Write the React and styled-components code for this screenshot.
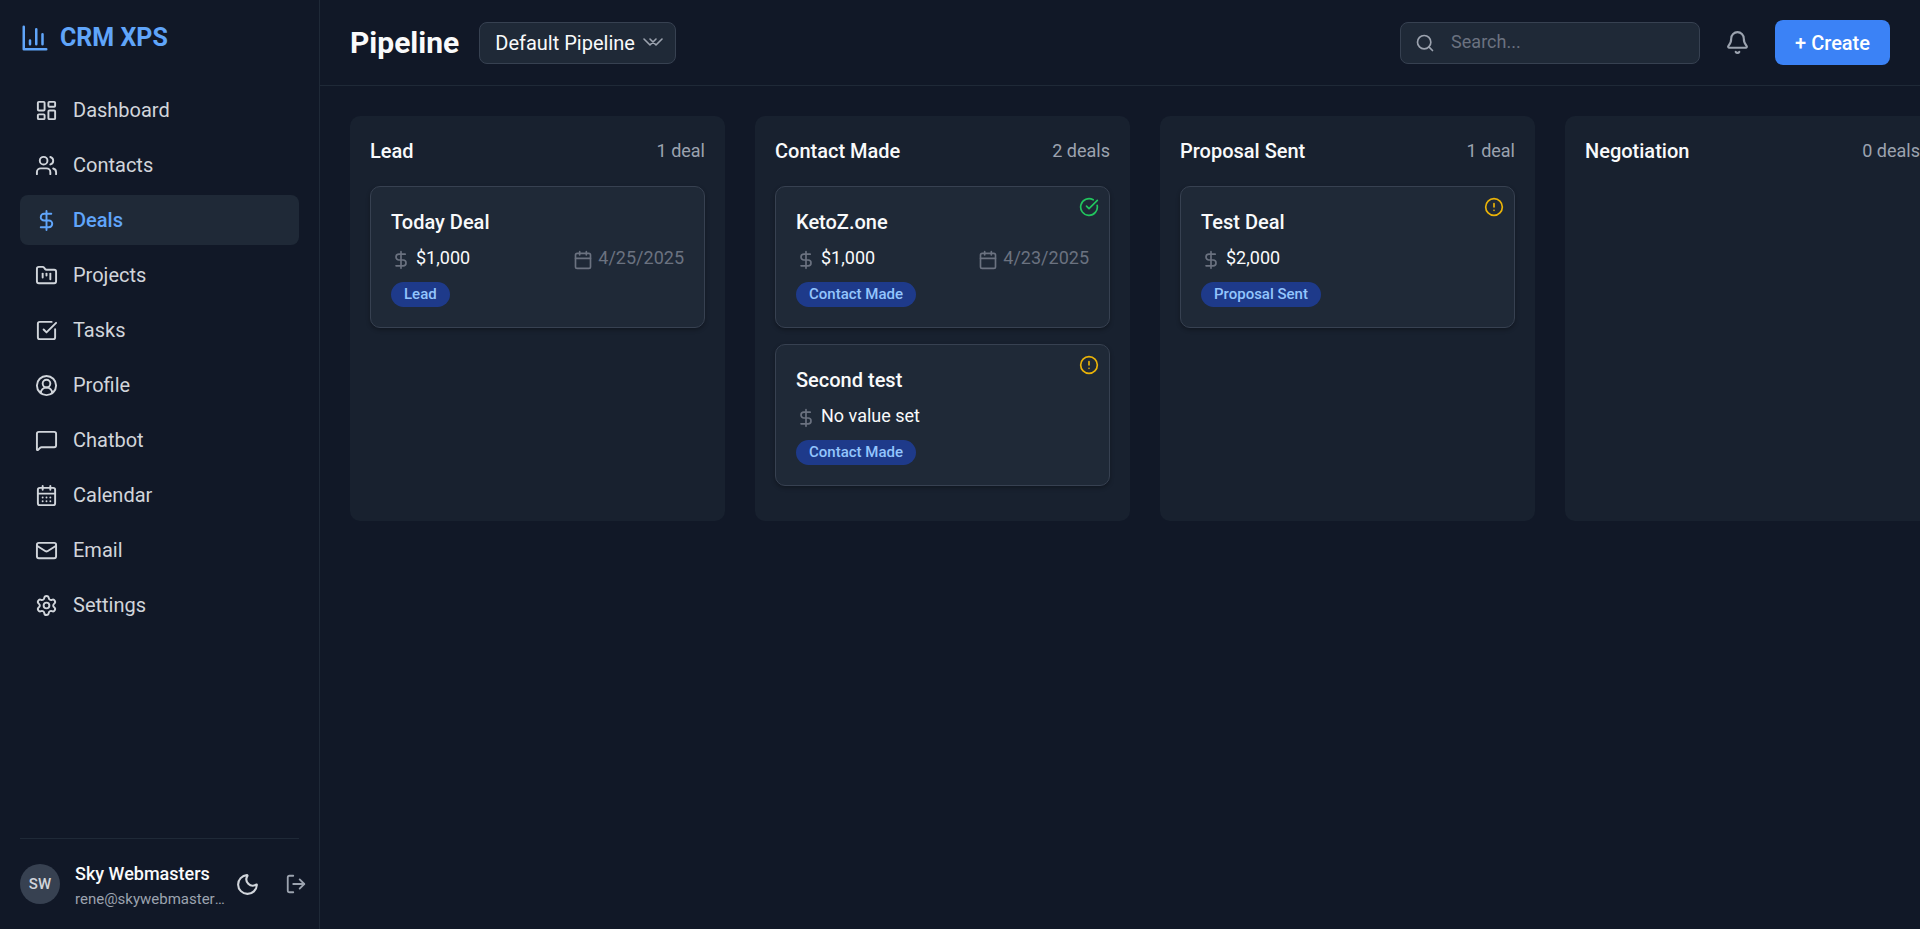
import React, { useState } from "react";
import styled, { createGlobalStyle } from "styled-components";
import {
  Bell,
  Calendar,
  CalendarDays,
  CircleAlert,
  CircleCheckBig,
  CircleUserRound,
  DollarSign,
  FolderKanban,
  LayoutDashboard,
  LogOut,
  Mail,
  MessageSquare,
  Moon,
  Search,
  Settings,
  SquareCheckBig,
  Users,
} from "lucide-react";

const navItems = [
  { label: "Dashboard", icon: LayoutDashboard },
  { label: "Contacts", icon: Users },
  { label: "Deals", icon: DollarSign },
  { label: "Projects", icon: FolderKanban },
  { label: "Tasks", icon: SquareCheckBig },
  { label: "Profile", icon: CircleUserRound },
  { label: "Chatbot", icon: MessageSquare },
  { label: "Calendar", icon: CalendarDays },
  { label: "Email", icon: Mail },
  { label: "Settings", icon: Settings },
];

const stages = [
  {
    name: "Lead",
    deals: [{ title: "Today Deal", value: "$1,000", date: "4/25/2025" }],
  },
  {
    name: "Contact Made",
    deals: [
      {
        title: "KetoZ.one",
        value: "$1,000",
        date: "4/23/2025",
        status: "done",
      },
      { title: "Second test", value: "No value set", status: "warning" },
    ],
  },
  {
    name: "Proposal Sent",
    deals: [{ title: "Test Deal", value: "$2,000", status: "warning" }],
  },
  { name: "Negotiation", deals: [] },
];

function DealCard({ deal, stage }) {
  return (
    <Card>
      {deal.status && (
        <Status $status={deal.status}>
          {deal.status === "done" ? (
            <CircleCheckBig size={20} />
          ) : (
            <CircleAlert size={20} />
          )}
        </Status>
      )}
      <CardTitle>{deal.title}</CardTitle>
      <CardRow>
        <Value>
          <DollarSign size={20} />
          {deal.value}
        </Value>
        {deal.date && (
          <DueDate>
            <Calendar size={20} />
            {deal.date}
          </DueDate>
        )}
      </CardRow>
      <Tag>{stage}</Tag>
    </Card>
  );
}

export default function App() {
  const [active, setActive] = useState("Deals");
  const [search, setSearch] = useState("");

  return (
    <>
      <GlobalStyle />
      <Layout>
        <Sidebar>
          <Logo>
            <svg
              width="30"
              height="30"
              viewBox="0 0 24 24"
              fill="none"
              stroke="currentColor"
              strokeWidth="2"
              strokeLinecap="round"
              strokeLinejoin="round"
            >
              <path d="M3 3v18h18M8 17v-3M13 17V5M18 17V9" />
            </svg>
            CRM XPS
          </Logo>
          <Nav>
            {navItems.map(({ label, icon: Icon }) => (
              <NavLink
                key={label}
                href={`#${label.toLowerCase()}`}
                $active={active === label}
                onClick={() => setActive(label)}
              >
                <Icon size={23} />
                {label}
              </NavLink>
            ))}
          </Nav>
          <UserPanel>
            <Avatar>SW</Avatar>
            <UserInfo>
              <UserName>Sky Webmasters</UserName>
              <UserEmail>rene@skywebmasters.com</UserEmail>
            </UserInfo>
            <UserActions>
              <IconButton aria-label="Toggle theme" $bright>
                <Moon size={25} />
              </IconButton>
              <IconButton aria-label="Log out">
                <LogOut size={22} />
              </IconButton>
            </UserActions>
          </UserPanel>
        </Sidebar>

        <Main>
          <Header>
            <HeaderGroup>
              <Title>Pipeline</Title>
              <SelectWrap>
                <Select aria-label="Pipeline" defaultValue="default">
                  <option value="default">Default Pipeline</option>
                </Select>
                <Chevrons viewBox="0 0 20 10" aria-hidden="true">
                  <path d="M1 1l6 6 6-6M7 1l6 6 6-6" />
                </Chevrons>
              </SelectWrap>
            </HeaderGroup>
            <HeaderGroup>
              <SearchBox>
                <Search size={20} />
                <SearchInput
                  type="text"
                  aria-label="Search"
                  placeholder="Search..."
                  value={search}
                  onChange={(e) => setSearch(e.target.value)}
                />
              </SearchBox>
              <BellButton aria-label="Notifications">
                <Bell size={25} />
              </BellButton>
              <CreateButton>+ Create</CreateButton>
            </HeaderGroup>
          </Header>

          <Board>
            {stages.map((stage) => (
              <Column key={stage.name}>
                <ColumnHeader>
                  <ColumnTitle>{stage.name}</ColumnTitle>
                  <Count>
                    {stage.deals.length}{" "}
                    {stage.deals.length === 1 ? "deal" : "deals"}
                  </Count>
                </ColumnHeader>
                <CardList>
                  {stage.deals.map((deal) => (
                    <DealCard key={deal.title} deal={deal} stage={stage.name} />
                  ))}
                </CardList>
              </Column>
            ))}
          </Board>
        </Main>
      </Layout>
    </>
  );
}

const GlobalStyle = createGlobalStyle`
  * {
    box-sizing: border-box;
  }
  body {
    margin: 0;
    background-color: #111827;
    color: #f9fafb;
    font-family: Roboto, "Liberation Sans", sans-serif;
    font-size: 20px;
    line-height: 30px;
  }
  button, input, select {
    font: inherit;
    color: inherit;
  }
  svg {
    flex-shrink: 0;
  }
`;

const Layout = styled.div`
  display: flex;
  min-height: 100vh;
`;

const Sidebar = styled.aside`
  display: flex;
  flex-direction: column;
  flex-shrink: 0;
  width: 320px;
  padding: 20px;
  border-right: 1px solid #1f2937;
`;

const Logo = styled.div`
  display: flex;
  align-items: center;
  gap: 10px;
  height: 35px;
  margin-bottom: 30px;
  color: #60a5fa;
  font-size: 25px;
  font-weight: 700;
`;

const Nav = styled.nav`
  display: flex;
  flex-direction: column;
  gap: 5px;
`;

const NavLink = styled.a`
  display: flex;
  align-items: center;
  gap: 15px;
  padding: 10px 15px;
  border-radius: 8px;
  background-color: ${(props) => (props.$active ? "#1f2937" : "transparent")};
  color: ${(props) => (props.$active ? "#60a5fa" : "#d1d5db")};
  font-weight: ${(props) => (props.$active ? 500 : 400)};
  text-decoration: none;
`;

const UserPanel = styled.div`
  display: flex;
  align-items: center;
  margin-top: auto;
  padding-top: 20px;
  border-top: 1px solid #1f2937;
`;

const Avatar = styled.div`
  display: flex;
  align-items: center;
  justify-content: center;
  flex-shrink: 0;
  width: 40px;
  height: 40px;
  margin-right: 15px;
  border-radius: 50%;
  background-color: #374151;
  color: #d1d5db;
  font-size: 15px;
  font-weight: 500;
`;

const UserInfo = styled.div`
  flex: 0 0 150px;
  min-width: 0;
`;

const UserName = styled.div`
  font-size: 18px;
  line-height: 30px;
  font-weight: 500;
`;

const UserEmail = styled.div`
  overflow: hidden;
  color: #9ca3af;
  font-size: 15px;
  line-height: 20px;
  text-overflow: ellipsis;
  white-space: nowrap;
`;

const UserActions = styled.div`
  display: flex;
  align-items: center;
  gap: 25px;
  margin-left: 10px;
`;

const IconButton = styled.button`
  display: flex;
  padding: 0;
  border: 0;
  background: none;
  color: ${(props) => (props.$bright ? "#d1d5db" : "#9ca3af")};
  cursor: pointer;
`;

const Main = styled.main`
  flex: 1;
  min-width: 0;
`;

const Header = styled.header`
  display: flex;
  align-items: center;
  justify-content: space-between;
  padding: 20px 30px;
  border-bottom: 1px solid #1f2937;
`;

const HeaderGroup = styled.div`
  display: flex;
  align-items: center;
  gap: 20px;
`;

const Title = styled.h1`
  margin: 0;
  font-size: 30px;
  font-weight: 700;
  line-height: 40px;
`;

const SelectWrap = styled.div`
  position: relative;
`;

const Select = styled.select`
  height: 42px;
  padding: 0 40px 0 15px;
  border: 1px solid #374151;
  border-radius: 8px;
  background-color: #1f2937;
  appearance: none;
`;

const Chevrons = styled.svg`
  position: absolute;
  top: 16px;
  right: 13px;
  width: 20px;
  fill: none;
  stroke: #9ca3af;
  stroke-width: 1.6;
  stroke-linecap: round;
  stroke-linejoin: round;
  pointer-events: none;
`;

const SearchBox = styled.label`
  display: flex;
  align-items: center;
  gap: 16px;
  width: 300px;
  height: 42px;
  padding: 0 14px;
  border: 1px solid #374151;
  border-radius: 8px;
  background-color: #1f2937;
  color: #9ca3af;
`;

const SearchInput = styled.input`
  width: 100%;
  padding: 0 0 2px;
  border: 0;
  outline: 0;
  background: none;
  color: #f9fafb;
  font-size: 18px;
  &::placeholder {
    color: #6b7280;
  }
`;

const BellButton = styled(IconButton)`
  padding: 5px;
`;

const CreateButton = styled.button`
  height: 45px;
  padding: 0 20px;
  border: 0;
  border-radius: 8px;
  background-color: #3b82f6;
  color: #fff;
  font-weight: 500;
  cursor: pointer;
`;

const Board = styled.div`
  display: flex;
  gap: 30px;
  padding: 30px;
  overflow: hidden;
`;

const Column = styled.section`
  flex: 0 0 375px;
  padding: 20px;
  border-radius: 10px;
  background-color: #18212f;
`;

const ColumnHeader = styled.div`
  display: flex;
  align-items: center;
  justify-content: space-between;
  margin-bottom: 20px;
`;

const ColumnTitle = styled.h2`
  margin: 0;
  font-size: 20px;
  font-weight: 500;
`;

const Count = styled.span`
  color: #9ca3af;
  font-size: 18px;
`;

const CardList = styled.div`
  display: flex;
  flex-direction: column;
  gap: 16px;
  min-height: 250px;
  padding-bottom: 15px;
`;

const Card = styled.article`
  position: relative;
  padding: 20px;
  border: 1px solid #374151;
  border-radius: 10px;
  background-color: #1f2937;
  box-shadow: 0 2px 4px rgba(0, 0, 0, 0.3);
`;

const Status = styled.span`
  position: absolute;
  top: 10px;
  right: 10px;
  display: flex;
  color: ${(props) => (props.$status === "done" ? "#22c55e" : "#eab308")};
`;

const CardTitle = styled.h3`
  margin: 0 0 8px;
  font-size: 20px;
  font-weight: 500;
`;

const CardRow = styled.div`
  display: flex;
  justify-content: space-between;
  margin-bottom: 12px;
  font-size: 18px;
  line-height: 25px;
`;

const Value = styled.span`
  display: flex;
  align-items: flex-end;
  gap: 5px;
  svg {
    color: #6b7280;
  }
`;

const DueDate = styled(Value)`
  color: #6b7280;
`;

const Tag = styled.span`
  display: block;
  width: fit-content;
  padding: 2px 13px;
  border-radius: 13px;
  background-color: #1e3a8a;
  color: #93c5fd;
  font-size: 15px;
  font-weight: 500;
  line-height: 21px;
`;
